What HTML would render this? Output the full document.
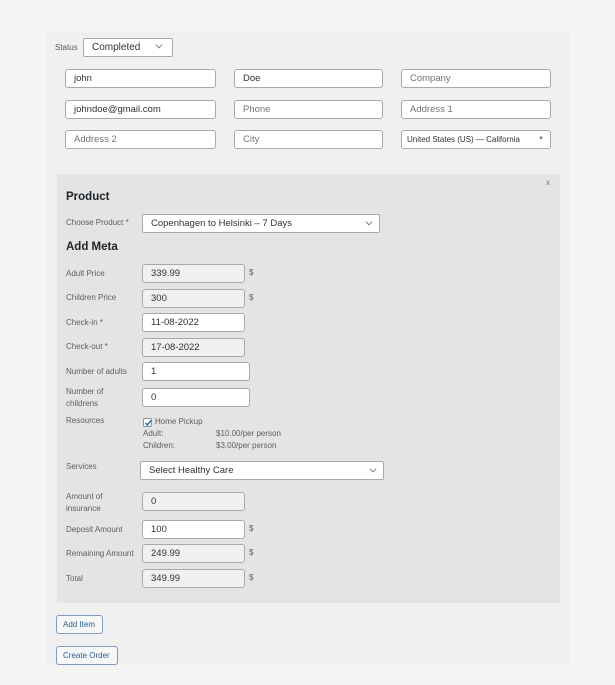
<!DOCTYPE html>
<html><head><meta charset="utf-8"><style>
*{box-sizing:border-box;margin:0;padding:0}
body{width:615px;height:685px;background:#f5f5f5;font-family:"Liberation Sans",sans-serif;font-size:9px;color:#3c434a;position:relative;overflow:hidden}
.a{position:absolute}
.panel{left:46px;top:32px;width:523px;height:633px;background:#f0f0f0}
.box{left:57px;top:174px;width:503px;height:429px;background:#e4e4e4}
.in{position:absolute;height:19px;border:1px solid #a7aaad;border-radius:3px;background:#fff;padding:0 8px;line-height:17px;font-size:9.5px;color:#2c3338;white-space:nowrap}
.ph{color:#70757a}
.g{background:#f0f0f0}
.lb{position:absolute;font-size:8px;color:#5a6067;line-height:12px}
.d{position:absolute;font-size:8px;color:#5a6067}
.chev{position:absolute;right:7px;top:4px;width:6px;height:6px;border-right:1px solid #666;border-bottom:1px solid #666;transform:rotate(45deg) scale(.8)}
h3{position:absolute;font-size:11.5px;font-weight:bold;color:#1d2327}
.btn{position:absolute;height:19px;border:1px solid #7a9cc0;border-radius:3px;background:#f6f7f7;color:#2c5f8f;font-size:8px;line-height:17px;padding:0 6px}
</style></head><body>
<div class="a panel"></div>
<div class="lb" style="left:55px;top:42px">Status</div>
<div class="in" style="left:83px;top:38px;width:90px;border-radius:2px;font-size:10px">Completed<span class="chev" style="right:10px;top:3px"></span></div>

<div class="in" style="left:65px;top:69px;width:151px">john</div>
<div class="in" style="left:234px;top:69px;width:149px">Doe</div>
<div class="in ph" style="left:401px;top:69px;width:150px">Company</div>
<div class="in" style="left:65px;top:100px;width:151px">johndoe@gmail.com</div>
<div class="in ph" style="left:234px;top:100px;width:149px">Phone</div>
<div class="in ph" style="left:401px;top:100px;width:150px">Address 1</div>
<div class="in ph" style="left:65px;top:130px;width:151px">Address 2</div>
<div class="in ph" style="left:234px;top:130px;width:149px">City</div>
<div class="in" style="left:401px;top:130px;width:150px;padding-left:5px;font-size:8px">United States (US) — California<span style="position:absolute;right:6px;top:0;font-size:6px;color:#777">▼</span></div>

<div class="a box"></div>
<div class="d" style="left:546px;top:178px;color:#777">x</div>
<h3 style="left:66px;top:191px">Product</h3>
<div class="lb" style="left:66px;top:217px">Choose Product *</div>
<div class="in" style="left:142px;top:214px;width:238px;border-radius:2px">Copenhagen to Helsinki – 7 Days<span class="chev"></span></div>
<h3 style="left:66px;top:241px">Add Meta</h3>

<div class="lb" style="left:66px;top:268px">Adult Price</div>
<div class="in g" style="left:142px;top:264px;width:103px">339.99</div><div class="d" style="left:249px;top:268px">$</div>
<div class="lb" style="left:66px;top:292px">Children Price</div>
<div class="in g" style="left:142px;top:289px;width:103px">300</div><div class="d" style="left:249px;top:293px">$</div>
<div class="lb" style="left:66px;top:317px">Check-in *</div>
<div class="in" style="left:142px;top:313px;width:103px">11-08-2022</div>
<div class="lb" style="left:66px;top:341px">Check-out *</div>
<div class="in g" style="left:142px;top:338px;width:103px">17-08-2022</div>
<div class="lb" style="left:66px;top:366px">Number of adults</div>
<div class="in" style="left:142px;top:362px;width:108px">1</div>
<div class="lb" style="left:66px;top:386px">Number of<br>childrens</div>
<div class="in" style="left:142px;top:388px;width:108px">0</div>

<div class="lb" style="left:66px;top:415px">Resources</div>
<div class="a" style="left:143px;top:418px;width:9px;height:9px;border:1px solid #8c8f94;background:#fff;border-radius:2px"></div>
<svg class="a" style="left:143px;top:418px" width="10" height="10"><path d="M2.5 5 L4.3 7 L8 2.5" stroke="#2271b1" stroke-width="1.4" fill="none"/></svg>
<div class="d" style="left:155px;top:417px">Home Pickup</div>
<div class="d" style="left:143px;top:429px">Adult:</div><div class="d" style="left:216px;top:429px">$10.00/per person</div>
<div class="d" style="left:143px;top:441px">Children:</div><div class="d" style="left:216px;top:441px">$3.00/per person</div>

<div class="lb" style="left:66px;top:461px">Services</div>
<div class="in" style="left:140px;top:461px;width:244px;border-radius:2px">Select Healthy Care<span class="chev"></span></div>
<div class="lb" style="left:66px;top:491px">Amount of<br>insurance</div>
<div class="in g" style="left:142px;top:492px;width:103px">0</div>
<div class="lb" style="left:66px;top:524px">Deposit Amount</div>
<div class="in" style="left:142px;top:520px;width:103px">100</div><div class="d" style="left:249px;top:524px">$</div>
<div class="lb" style="left:66px;top:548px">Remaining Amount</div>
<div class="in g" style="left:142px;top:544px;width:103px">249.99</div><div class="d" style="left:249px;top:548px">$</div>
<div class="lb" style="left:66px;top:573px">Total</div>
<div class="in g" style="left:142px;top:569px;width:103px">349.99</div><div class="d" style="left:249px;top:573px">$</div>

<div class="btn" style="left:56px;top:615px;width:47px">Add Item</div>
<div class="btn" style="left:56px;top:646px;width:62px">Create Order</div>
</body></html>
